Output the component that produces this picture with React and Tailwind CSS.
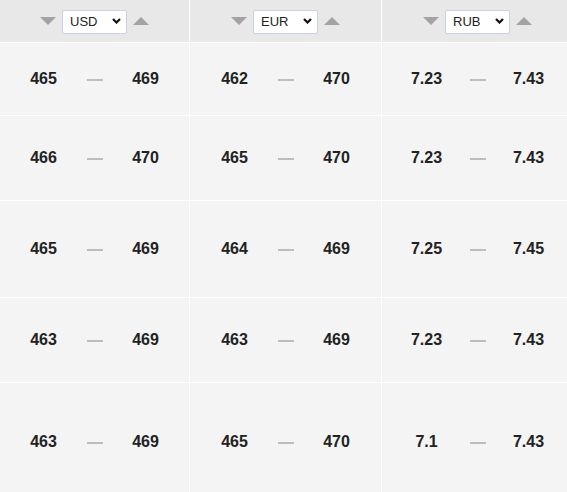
import React, { useState } from 'react';

const rows = [
  { h: 'h-[72px]', cells: [['465', '469'], ['462', '470'], ['7.23', '7.43']] },
  { h: 'h-[84px]', cells: [['466', '470'], ['465', '470'], ['7.23', '7.43']] },
  { h: 'h-[96px]', cells: [['465', '469'], ['464', '469'], ['7.25', '7.45']] },
  { h: 'h-[84px]', cells: [['463', '469'], ['463', '469'], ['7.23', '7.43']] },
  { h: 'h-[118px]', cells: [['463', '469'], ['465', '470'], ['7.1', '7.43']] }
];

function Arrow({ up = false }) {
  return (
    <svg width="16" height="8" viewBox="0 0 16 8" className="shrink-0">
      {up ? <polygon points="0,8 16,8 8,0" fill="#a3a3a3" /> : <polygon points="0,0 16,0 8,8" fill="#a3a3a3" />}
    </svg>
  );
}

function CurrencySelect({ initial }) {
  const [value, setValue] = useState(initial);
  return (
    <div className="relative h-[24px] w-[65px]">
      <select
        value={value}
        onChange={(e) => setValue(e.target.value)}
        className="h-full w-full appearance-none rounded-[2px] border border-[#c9d1e2] bg-white pl-[7px] text-[13px] text-[#222] outline-none"
      >
        <option>USD</option>
        <option>EUR</option>
        <option>RUB</option>
      </select>
      <svg
        width="9"
        height="6"
        viewBox="0 0 9 6"
        className="pointer-events-none absolute right-[6px] top-[9px]"
      >
        <polyline points="1,1 4.5,4.5 8,1" fill="none" stroke="#111" strokeWidth="2.2" />
      </svg>
    </div>
  );
}

function Cell({ from, to }) {
  return (
    <div className="flex items-center justify-center gap-[18px] bg-[#f4f4f4]">
      <span className="w-[50px] text-center">{from}</span>
      <span className="mt-[2px] h-[2px] w-[16px] bg-[#bdbdbd]" />
      <span className="w-[50px] text-center">{to}</span>
    </div>
  );
}

export default function App() {
  return (
    <div className="h-screen w-full overflow-hidden bg-white font-['Liberation_Sans',Arial,sans-serif]">
      <div className="grid w-[573px] grid-cols-[189px_191px_191px] gap-px bg-white text-[16px] font-bold text-[#222]">
        {['USD', 'EUR', 'RUB'].map((c) => (
          <div key={c} className="flex h-[42px] items-center justify-center gap-[6px] bg-[#e8e8e8] font-normal">
            <Arrow />
            <CurrencySelect initial={c} />
            <Arrow up />
          </div>
        ))}
        {rows.map((r, i) =>
          r.cells.map(([a, b], j) => (
            <div key={`${i}-${j}`} className={`${r.h} grid`}>
              <Cell from={a} to={b} />
            </div>
          ))
        )}
      </div>
    </div>
  );
}
